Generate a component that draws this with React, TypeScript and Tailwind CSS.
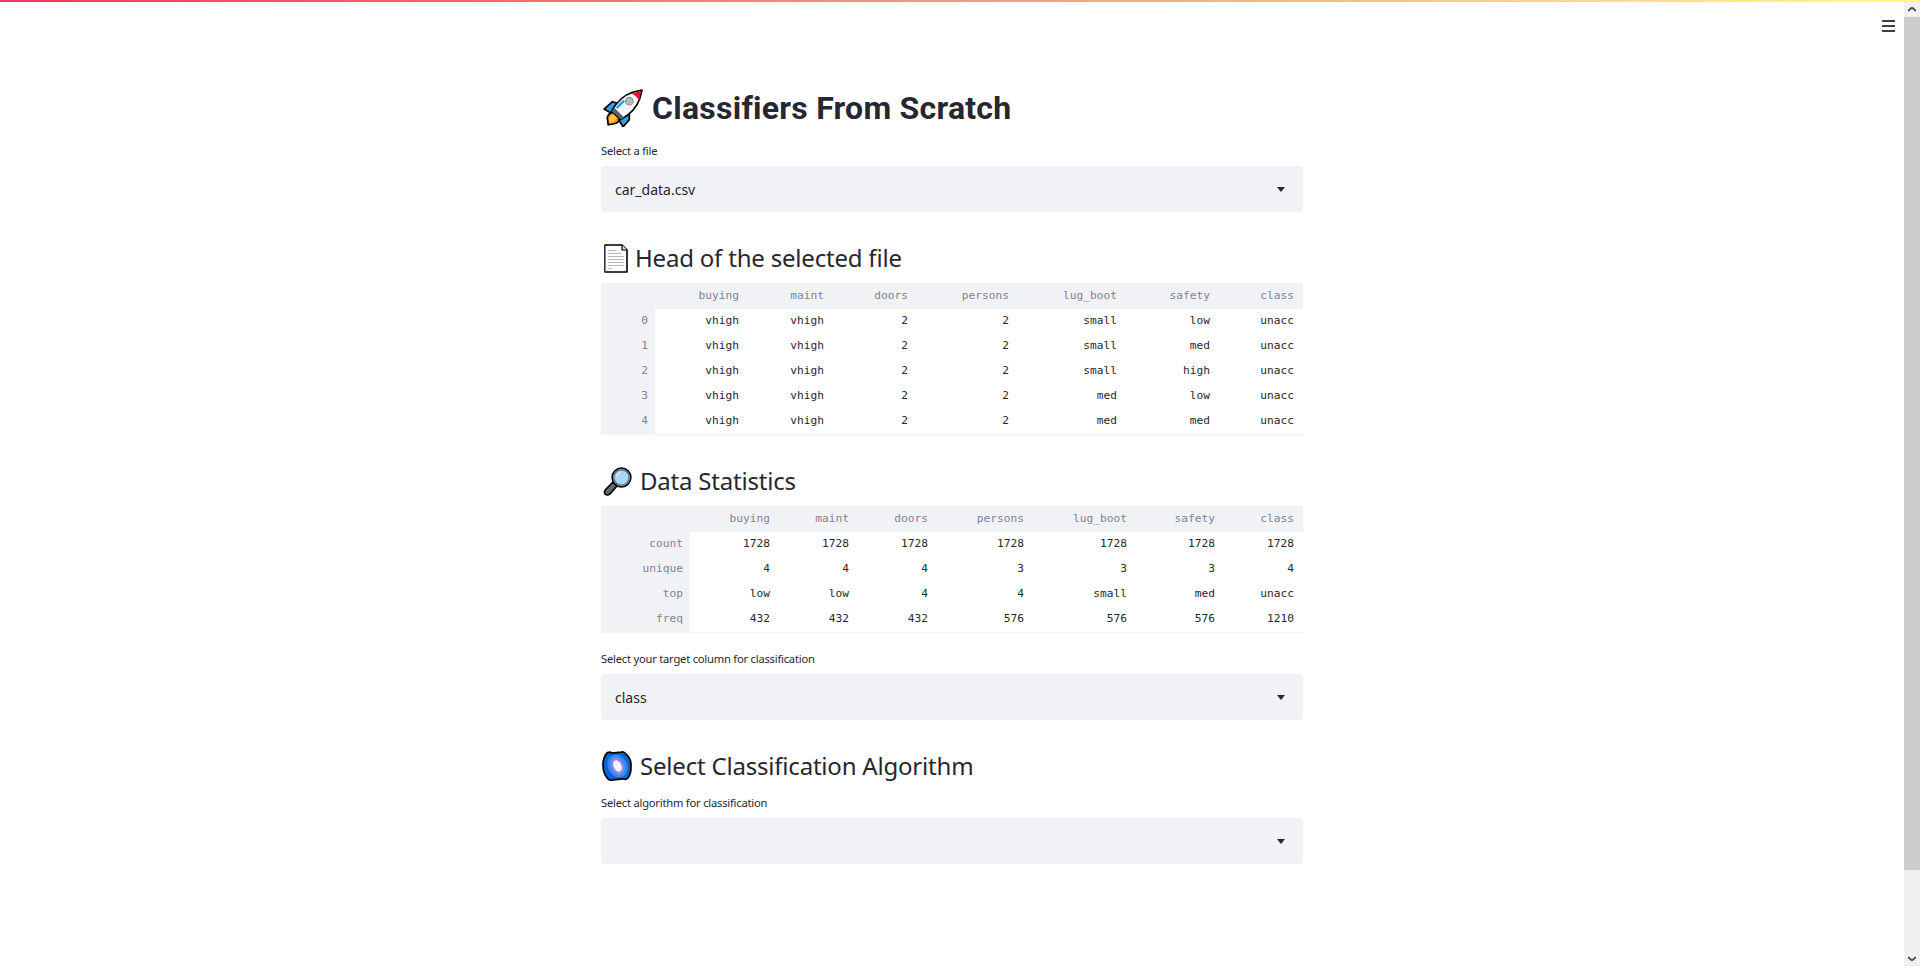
import React from "react";

const SANS = "font-['Noto_Sans','Open_Sans',sans-serif]";

function Rocket() {
  return (
    <svg viewBox="0 0 38 36" className="w-[40px] h-[38px]" aria-hidden="true">
      <path d="M5 34 L4 27 Q6 22 10 21 L17 27 Q15 32 11 33 Z" fill="#f98a1d" stroke="#000" strokeWidth="1.6" />
      <path d="M6 32 L6 27 Q8 24 10 24 L13 27 Q12 30 10 31 Z" fill="#ffc93a" />
      <path d="M1 19 L9 12 L15 14 L8 23 Z" fill="#2aa4ef" stroke="#000" strokeWidth="1.6" strokeLinejoin="round" />
      <path d="M19 36 L25 29 L25 22 L15 29 Z" fill="#2aa4ef" stroke="#000" strokeWidth="1.6" strokeLinejoin="round" />
      <path d="M8 21 Q16 7 28 3 L37 1 L35 9 Q31 21 17 29 Z" fill="#f4f6f8" stroke="#000" strokeWidth="1.6" strokeLinejoin="round" />
      <path d="M27 4 L36 2 L34.5 10.5 Q31 6 27 4 Z" fill="#e8112d" />
      <path d="M8.5 21 L17 29 L20 27 L11 18 Z" fill="#5c5f66" />
      <path d="M13 18 L20 11" stroke="#2aa4ef" strokeWidth="2.6" fill="none" />
      <circle cx="25" cy="11.5" r="3.6" fill="#b5b9bf" stroke="#8f9399" strokeWidth="1" />
    </svg>
  );
}

function Doc() {
  return (
    <svg viewBox="0 0 24 29" className="w-[24px] h-[29px]" aria-hidden="true">
      <path d="M1 1 H18 L23 6 V28 H1 Z" fill="#fdfdfd" stroke="#000" strokeWidth="1.6" strokeLinejoin="round" />
      <path d="M18 1 V6 H23" fill="#dfe3e6" stroke="#000" strokeWidth="1.2" />
      <path d="M4 6.5 H12 M4 9.5 H17 M4 12.5 H20 M4 15.5 H20 M4 18.5 H20 M4 21.5 H20 M4 24.5 H8" stroke="#b4b8bd" strokeWidth="1.2" />
      <path d="M1.6 2 V27.5" stroke="#f4a12c" strokeWidth="0.8" />
    </svg>
  );
}

function Magnifier() {
  return (
    <svg viewBox="0 0 29 29" className="w-[29px] h-[29px]" aria-hidden="true">
      <path d="M3 22 L10 15 L14 19 L7 27 Q4 29 2 27 Q0.5 25 3 22 Z" fill="#62686e" stroke="#000" strokeWidth="1.6" strokeLinejoin="round" />
      <circle cx="18.5" cy="10.5" r="9.4" fill="#8cc6f2" stroke="#000" strokeWidth="1.5" />
      <circle cx="18.5" cy="10.5" r="7.6" fill="#a8d6f8" stroke="#5f6a73" strokeWidth="1.2" />
      <path d="M13 12 Q13 6 18 5 Q14 8 13 12 Z" fill="#e3f3ff" />
    </svg>
  );
}

function Galaxy() {
  return (
    <svg viewBox="0 0 28 28" className="w-[30px] h-[30px]" aria-hidden="true">
      <path d="M5 1.5 Q8 0.5 9 2 L18 1 Q20 0.5 22 2.5 Q27.5 7 27 14 Q27.5 21 24 25.5 Q22 27 20 26 L10 27 Q8 28 5.5 26 Q0.5 20 1 12 Q1 6 5 1.5 Z" fill="#0a63cf" stroke="#000" strokeWidth="1.6" strokeLinejoin="round" />
      <ellipse cx="14.5" cy="14" rx="9" ry="11" transform="rotate(-25 14.5 14)" fill="#2f8cf0" />
      <ellipse cx="14.5" cy="14" rx="6" ry="8.5" transform="rotate(-25 14.5 14)" fill="#8f83f4" />
      <ellipse cx="14.5" cy="14" rx="3.6" ry="5.6" transform="rotate(-25 14.5 14)" fill="#f8f4ff" />
    </svg>
  );
}

function Label({ children }: { children: React.ReactNode }) {
  return <div className={`h-4 mb-[7px] text-[11.2px] tracking-[-0.22px] leading-4 text-[#262730] ${SANS}`}>{children}</div>;
}

function Select({ value }: { value?: string }) {
  return (
    <div className={`h-[46px] bg-[#f0f2f6] rounded flex items-center justify-between pl-[14px] pr-[18px] text-[14px] text-[#262730] ${SANS}`}>
      <span>{value}</span>
      <svg viewBox="0 0 8 5" className="w-2 h-[5px]" aria-hidden="true">
        <path d="M0 0 H8 L4 5 Z" fill="#262730" />
      </svg>
    </div>
  );
}

function Heading({ icon, children, className }: { icon: React.ReactNode; children: React.ReactNode; className: string }) {
  return (
    <h2 className={`h-9 flex items-center text-[24px] tracking-[-0.2px] font-normal text-[#262730] ${SANS} ${className}`}>
      {icon}
      {children}
    </h2>
  );
}

type TableData = { widths: string[]; head: string[]; rows: string[][] };

function DataTable({ widths, head, rows }: TableData) {
  return (
    <table className="w-[702px] table-fixed border-collapse font-['DejaVu_Sans_Mono',monospace] text-[11.2px] text-right border-b border-[#f0f2f6]">
      <colgroup>
        {widths.map((w, i) => (
          <col key={i} className={w} />
        ))}
      </colgroup>
      <thead>
        <tr className="h-[26px] bg-[#f0f2f6] text-[#808495]">
          {head.map((h, i) => (
            <th key={i} className="font-normal p-0 pr-2 last:pr-[9px]">{h}</th>
          ))}
        </tr>
      </thead>
      <tbody>
        {rows.map((r, i) => (
          <tr key={i} className="h-[25px]">
            {r.map((c, j) =>
              j === 0 ? (
                <th key={j} className="font-normal bg-[#f0f2f6] text-[#808495] p-0 pr-[7px]">{c}</th>
              ) : (
                <td key={j} className="text-[#262730] p-0 pr-2 last:pr-[9px]">{c}</td>
              )
            )}
          </tr>
        ))}
      </tbody>
    </table>
  );
}

const headRows = [
  ["0", "vhigh", "vhigh", "2", "2", "small", "low", "unacc"],
  ["1", "vhigh", "vhigh", "2", "2", "small", "med", "unacc"],
  ["2", "vhigh", "vhigh", "2", "2", "small", "high", "unacc"],
  ["3", "vhigh", "vhigh", "2", "2", "med", "low", "unacc"],
  ["4", "vhigh", "vhigh", "2", "2", "med", "med", "unacc"],
];
const statRows = [
  ["count", "1728", "1728", "1728", "1728", "1728", "1728", "1728"],
  ["unique", "4", "4", "4", "3", "3", "3", "4"],
  ["top", "low", "low", "4", "4", "small", "med", "unacc"],
  ["freq", "432", "432", "432", "576", "576", "576", "1210"],
];
const cols = ["", "buying", "maint", "doors", "persons", "lug_boot", "safety", "class"];

export default function App() {
  return (
    <div className="h-[966px] w-full overflow-hidden flex flex-col bg-white">
      <div className="h-[2px] shrink-0 bg-[linear-gradient(90deg,#f63366,#fffd80)]" />
      <div className="flex-1 flex min-h-0">
        <main className="relative flex-1 flex justify-center">
          <button className="absolute top-[18px] right-[9px] w-[13px] h-3 flex flex-col justify-between" aria-label="menu">
            <span className="block h-[2px] w-full bg-[#3c3d46]" />
            <span className="block h-[2px] w-full bg-[#3c3d46]" />
            <span className="block h-[2px] w-full bg-[#3c3d46]" />
          </button>
          <div className="w-[702px] pt-[83px]">
            <h1 className="h-[46px] flex items-center text-[32px] tracking-[0.25px] font-bold text-[#262730] mb-3 font-['Roboto',sans-serif]">
              <span className="ml-[2px] mr-[9px] flex"><Rocket /></span>
              Classifiers From Scratch
            </h1>
            <Label>Select a file</Label>
            <Select value="car_data.csv" />
            <Heading className="mt-7 mb-[7px]" icon={<span className="ml-[3px] mr-[7px] flex"><Doc /></span>}>Head of the selected file</Heading>
            <DataTable
              widths={["w-[54px]", "w-[92px]", "w-[85px]", "w-[84px]", "w-[101px]", "w-[108px]", "w-[93px]", "w-[85px]"]}
              head={cols}
              rows={headRows}
            />
            <Heading className="mt-[28.5px] mb-[7px]" icon={<span className="ml-[2px] mr-[8px] flex"><Magnifier /></span>}>Data Statistics</Heading>
            <DataTable
              widths={["w-[89px]", "w-[88px]", "w-[79px]", "w-[79px]", "w-[96px]", "w-[103px]", "w-[88px]", "w-[80px]"]}
              head={cols}
              rows={statRows}
            />
            <div className="mt-[18.5px]">
              <Label>Select your target column for classification</Label>
            </div>
            <Select value="class" />
            <Heading className="mt-[28px] mb-[11px]" icon={<span className="ml-[1px] mr-[8px] flex"><Galaxy /></span>}>Select Classification Algorithm</Heading>
            <Label>Select algorithm for classification</Label>
            <Select />
          </div>
        </main>
        <div className="w-4 shrink-0 flex flex-col bg-[#f0f0f0]">
          <div className="h-[15px] flex items-center justify-center">
            <svg viewBox="0 0 8 5" className="w-2 h-[5px]" aria-hidden="true">
              <path d="M0 4 L4 0.5 L8 4" fill="none" stroke="#505050" strokeWidth="1.8" />
            </svg>
          </div>
          <div className="h-[853px] bg-[#cdcdcd]" />
          <div className="flex-1" />
          <div className="h-[15px] flex items-center justify-center">
            <svg viewBox="0 0 8 5" className="w-2 h-[5px]" aria-hidden="true">
              <path d="M0 1 L4 4.5 L8 1" fill="none" stroke="#505050" strokeWidth="1.8" />
            </svg>
          </div>
        </div>
      </div>
    </div>
  );
}
